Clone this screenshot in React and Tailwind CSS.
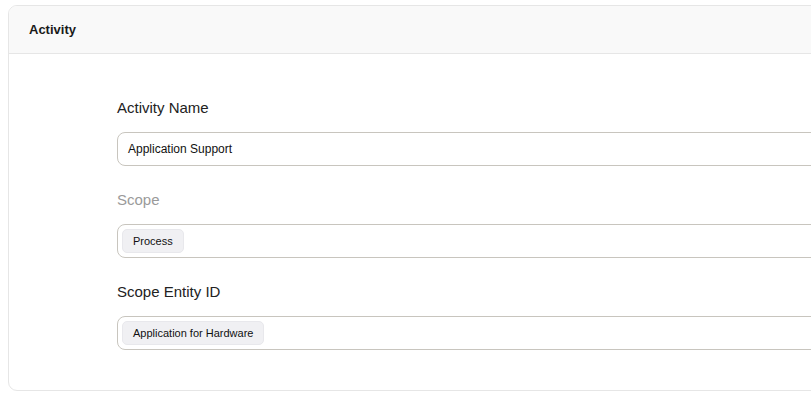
import React from 'react';

const Chip = ({ children }) => (
  <span className="inline-flex h-6 items-center rounded-[5px] border border-[#e8e8ec] bg-[#f0f0f3] px-[10px] text-[11px] font-medium text-[#111111]">
    {children}
  </span>
);

const Field = ({ label, muted, children }) => (
  <div className="flex flex-col">
    <label className={`text-[15px] leading-5 ${muted ? 'text-[#9a9a9a]' : 'text-[#222222]'}`}>{label}</label>
    <div className="mt-[14px] flex h-[34px] items-center rounded-[8px] border border-[#c8c5be] bg-white px-1">
      {children}
    </div>
  </div>
);

export default function App() {
  return (
    <div className="h-[399px] w-[811px] overflow-hidden bg-white font-['Liberation_Sans',Arial,sans-serif]">
      <div className="ml-2 mt-[5px] w-[1000px] overflow-hidden rounded-[9px] border border-[#e6e6e6]">
        <div className="flex h-[48px] items-center border-b border-[#e6e6e6] bg-[#f9f9f9] pl-5">
          <h2 className="text-[13px] font-bold text-[#1a1a1a]">Activity</h2>
        </div>
        <div className="flex flex-col gap-6 pb-10 pl-[108px] pt-[44px]">
          <Field label="Activity Name">
            <span className="pl-[6px] text-[12px] text-[#111111]">Application Support</span>
          </Field>
          <Field label="Scope" muted>
            <Chip>Process</Chip>
          </Field>
          <Field label="Scope Entity ID">
            <Chip>Application for Hardware</Chip>
          </Field>
        </div>
      </div>
    </div>
  );
}
